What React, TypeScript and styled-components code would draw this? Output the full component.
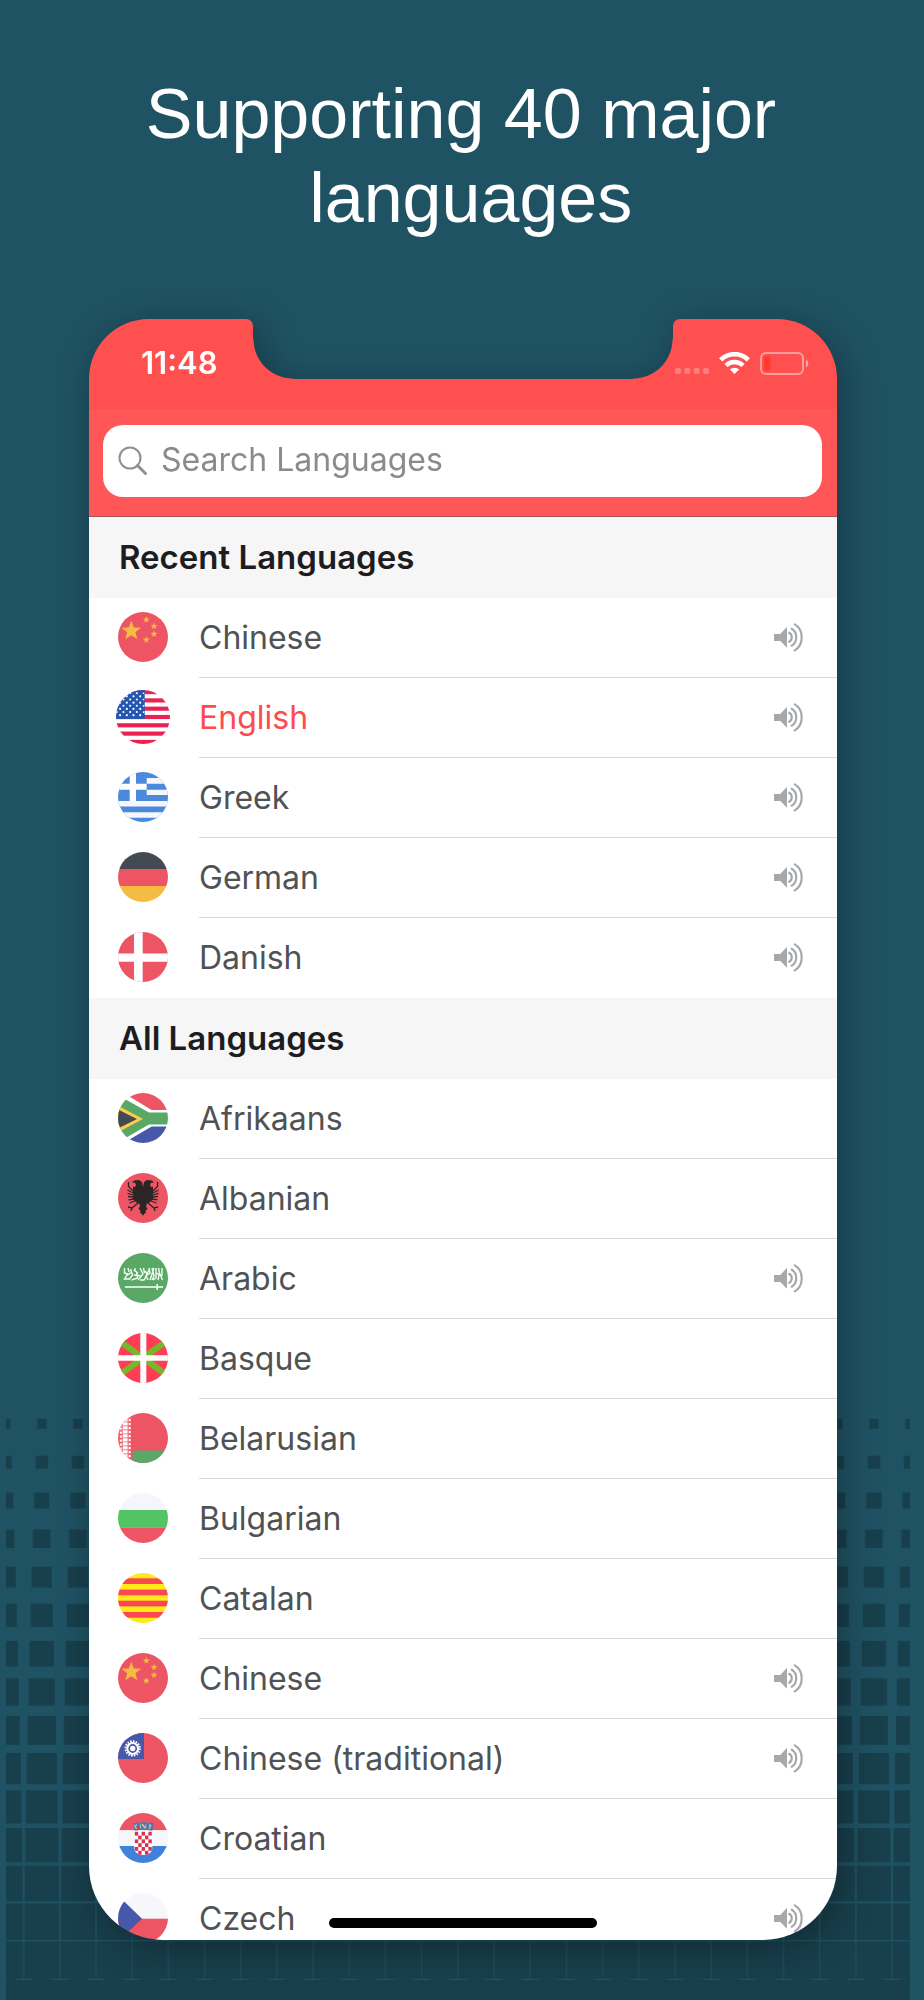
import React from 'react';
import styled, { createGlobalStyle } from 'styled-components';

const GlobalStyle = createGlobalStyle`
  *, *::before, *::after { box-sizing: border-box; }
  body { margin: 0; background: #1f5263; }
  button, input { font: inherit; color: inherit; }
`;

const coral = '#ff5050';
const coralLight = '#ff5757';

const Page = styled.main`
  position: relative;
  display: flex;
  flex-direction: column;
  height: 100vh;
  padding: 72px 87px 60px 89px;
  background: #1f5263;
  font-family: Inter, 'Liberation Sans', sans-serif;
`;

const Backdrop = styled.svg`
  position: absolute;
  left: 6px;
  right: 14px;
  bottom: 0;
  width: calc(100% - 20px);
  height: 600px;
`;

const Headline = styled.h1`
  margin: 0 0 79px;
  padding-right: 4px;
  color: #fff;
  font: 400 70px/84px 'Liberation Sans', Arial, sans-serif;
  text-align: center;
`;

const Phone = styled.section`
  position: relative;
  display: flex;
  flex: 1;
  flex-direction: column;
  min-height: 0;
  filter: drop-shadow(6px 8px 18px rgba(0, 0, 0, 0.3));
`;

const StatusBar = styled.div`
  display: flex;
  height: 60px;
`;

const Ear = styled.div<{ $side: 'left' | 'right' }>`
  display: flex;
  flex: 1 1 80px;
  align-items: center;
  justify-content: ${(p) => (p.$side === 'left' ? 'flex-start' : 'flex-end')};
  gap: 10px;
  padding: ${(p) => (p.$side === 'left' ? '28px 0 0 52px' : '28px 28px 0 0')};
  border-radius: ${(p) => (p.$side === 'left' ? '78px 9px 0 0' : '9px 78px 0 0')};
  background: ${coral};
`;

const Time = styled.time`
  color: #fff;
  font-size: 31px;
  font-weight: 600;
  line-height: 32px;
`;

const Notch = styled.div`
  display: flex;
  align-items: flex-end;
  justify-content: space-between;
  width: 420px;

  &::before,
  &::after {
    content: '';
    width: 40px;
    height: 40px;
  }
  &::before { background: radial-gradient(circle at 100% 0, transparent 39px, ${coral} 40px); }
  &::after { background: radial-gradient(circle at 0 0, transparent 39px, ${coral} 40px); }
`;

const StatusBase = styled.div`
  height: 30px;
  background: ${coral};
`;

const SearchBar = styled.div`
  padding: 16px 15px 19px 14px;
  border-bottom: 1px solid #a8555a;
  background: ${coralLight};
`;

const SearchField = styled.label`
  display: flex;
  align-items: center;
  gap: 13px;
  height: 72px;
  padding: 0 15px;
  border-radius: 20px;
  background: #fff;
`;

const SearchInput = styled.input`
  flex: 1;
  min-width: 0;
  padding: 0 0 2px;
  border: 0;
  outline: 0;
  background: transparent;
  color: #4f5153;
  font-size: 32px;
  line-height: 40px;

  &::placeholder { color: #8a8a8f; opacity: 1; }
`;

const Lists = styled.div`
  flex: 1;
  min-height: 0;
  overflow-y: auto;
  border-radius: 0 0 74px 74px;
  background: #fff;
  scrollbar-width: none;
`;

const SectionTitle = styled.h2`
  margin: 0;
  padding: 0 30px;
  background: #f6f6f6;
  color: #1d1d1f;
  font-size: 33px;
  font-weight: 600;
  line-height: 81px;
`;

const List = styled.ul`
  margin: 0;
  padding: 0;
  list-style: none;
`;

const Row = styled.li`
  display: flex;
  height: 80px;
`;

const FlagCell = styled.div`
  display: flex;
  align-items: center;
  justify-content: center;
  width: 110px;
  padding: 0 2px 2px 0;
`;

const FlagArt = styled.svg`
  display: block;
  flex: none;
  border-radius: 50%;
`;

const RowBody = styled.div`
  display: flex;
  flex: 1;
  align-items: center;
  padding-right: 33px;
  border-bottom: 1px solid #d9d9db;

  ${Row}:last-child & { border-bottom-color: transparent; }
`;

const NameButton = styled.button<{ $selected?: boolean }>`
  flex: 1;
  height: 100%;
  padding: 0;
  border: 0;
  background: none;
  color: ${(p) => (p.$selected ? '#ff4b4e' : '#505254')};
  font-size: 32px;
  line-height: 40px;
  text-align: left;
  cursor: pointer;
`;

const SpeakButton = styled.button`
  display: flex;
  padding: 0;
  border: 0;
  background: none;
  cursor: pointer;
`;

const HomeIndicator = styled.div`
  position: absolute;
  bottom: 12px;
  left: 50%;
  width: 268px;
  height: 10px;
  border-radius: 5px;
  background: #000;
  transform: translateX(-50%);
`;

/* ---------- backdrop: squares that grow row by row into a solid floor ---------- */

const cells = [
  [9.3, 10], [12.3, 13], [15.3, 16], [17.7, 18.6], [20.3, 21], [22.3, 23.3], [24.5, 25.7],
  [26.2, 27.3], [28.3, 29], [30.2, 31.2], [31.5, 33.2], [33, 34.4], [34.2, 35.8], [34.8, 36.7], [35.2, 37.4],
];

function Pattern() {
  return (
    <Backdrop aria-hidden="true">
      <defs>
        <pattern id="squares" x="-18.5" y="0" width="36.18" height="600" patternUnits="userSpaceOnUse">
          {cells.map(([w, h], i) => (
            <rect key={i} x={18.09 - w / 2} y={23.9 + i * 38.3 - h / 2} width={w} height={h} fill="#183f4c" />
          ))}
          <rect y="579" width="37" height="21" fill="#183f4c" />
          <path d="M0 579.5h8M28 579.5h9" stroke="#1f5263" strokeWidth="1" />
        </pattern>
      </defs>
      <rect width="100%" height="600" fill="url(#squares)" />
    </Backdrop>
  );
}

/* ---------- flags ---------- */

const red = '#ed5565';
const white = '#f5f7fa';
const yellow = '#f6bb42';
const navy = '#4758a9';
const green = '#5aa865';

function starPoints(cx: number, cy: number, r: number) {
  return Array.from({ length: 10 }, (_, i) => {
    const a = -Math.PI / 2 + (i * Math.PI) / 5;
    const k = i % 2 ? r * 0.42 : r;
    return `${(cx + k * Math.cos(a)).toFixed(2)},${(cy + k * Math.sin(a)).toFixed(2)}`;
  }).join(' ');
}

const smallStars = [[28.3, 7.7], [36, 14.2], [36, 22], [28.3, 27.8]];

const flags: Record<string, React.ReactNode> = {
  cn: (
    <>
      <rect width="50" height="50" fill={red} />
      <polygon points={starPoints(13.3, 19, 10.3)} fill={yellow} />
      {smallStars.map(([x, y]) => (
        <polygon key={`${x}-${y}`} points={starPoints(x, y, 3.6)} fill={yellow} />
      ))}
    </>
  ),
  us: (
    <>
      <rect width="50" height="50" fill="#fff" />
      {[0, 2, 4, 6, 8, 10, 12].map((i) => (
        <rect key={i} y={i * 3.846} width="50" height="3.846" fill="#eb2150" />
      ))}
      <rect width="26.6" height="26.9" fill="#2557b0" />
      {Array.from({ length: 8 }, (_, r) =>
        Array.from({ length: 4 }, (_, c) => (
          <circle key={`${r}-${c}`} cx={(r % 2 ? 3.8 : 0.7) + c * 6.2} cy={3 + r * 2.9} r="1" fill="#fff" />
        )),
      )}
      {[0, 2, 4, 6].map((r) => (
        <circle key={r} cx="25.5" cy={3 + r * 2.9} r="0.8" fill="#fff" />
      ))}
    </>
  ),
  gr: (
    <>
      <rect width="50" height="50" fill="#4a89dc" />
      <path d="M28.7 6H50v5.7H28.7zM28.7 17.7H50V23H28.7zM0 29h50v5.4H0zM0 40.3h50v5.4H0z" fill={white} />
      <path d="M11.7 0H18v29h-6.3zM0 11.7h28.7v6H0z" fill="#fff" />
    </>
  ),
  de: (
    <>
      <rect width="50" height="17" fill="#434a54" />
      <rect y="17" width="50" height="17" fill={red} />
      <rect y="34" width="50" height="16" fill={yellow} />
    </>
  ),
  dk: (
    <>
      <rect width="50" height="50" fill={red} />
      <path d="M16 0h8.7v50H16zM0 21.5h50v8.3H0z" fill="#fff" />
    </>
  ),
  za: (
    <>
      <rect width="50" height="50" fill="#fff" />
      <path d="M5.5 0L33.7 17H50V0z" fill={red} />
      <path d="M5.5 50l28.2-16.6H50V50z" fill={navy} />
      <path d="M-4 0L31 19.4h19v12H31L-4 51.5z" fill={green} />
      <path d="M-2 11.8L25 26-2 40.2z" fill="#ffce46" />
      <path d="M-2 15.5L19 26-2 36.5z" fill="#434a54" />
    </>
  ),
  al: (
    <>
      <rect width="50" height="50" fill={red} />
      <path
        d="M25 14l1-5 3-2 5 .5 2 2-3 .2-1 2 1 2.3 2-.5v13l-3.5 3-2.5 1-1 2.5 1.5 3-2 1.5.5 2.5-1.7.5L25 43l-1.3-2.5-1.7-.5.5-2.5-2-1.5 1.5-3-1-2.5-2.5-1-3.5-3v-13l2 .5 1-2.3-1-2-3-.2 2-2 5-.5 3 2z"
        fill="#2b2526"
      />
      <path
        d="M15 18l-4.5-4.5V9M39.5 9v4.5L35 18M15 20l-5.5-3M35 20l5.5-3M15 22l-5.5-1.7M35 22l5.5-1.7M15.5 24l-5.5-.5M34.5 24l5.5-.5M16 26l-5.5.8M34 26l5.5.8M17 28l-5.5 2M33 28l5.5 2M20 30l-6 5-4-1m4 1l-1 3M30 30l6 5 4-1m-4 1l1 3"
        fill="none"
        stroke="#2b2526"
        strokeWidth="1.3"
      />
    </>
  ),
  sa: (
    <>
      <rect width="50" height="50" fill={green} />
      <path
        d="M6.5 15v5l3 1-3 5h5l3-4-2-6M10 15l1 4M13.5 27l6-2-1-6-3-2M17 15v3l3 2M20 27l5-6-3-6M22 27h4l3-5-1.5-4M25.5 15l1 5M30 27l-2-4 4-3-1-5M32 27l4-12M34 15l2 8-2 4M38 15v10l-3 2M40 27l1-5-2-2M40.5 15l1 5 3 7M44 15v8M8 23l6-4M16 22l8 1M27 25l4-8"
        fill="none"
        stroke="#f3fbf4"
        strokeWidth="1.4"
      />
      <path d="M7 34h38M39.2 31v6" stroke="#fff" strokeWidth="1.5" />
    </>
  ),
  eu: (
    <>
      <rect width="50" height="50" fill="#ff3d55" />
      <path d="M0 7l50 36M50 7L0 43" stroke="#76b82a" strokeWidth="6" />
      <path d="M22.3 0h6v50h-6zM0 22.3h50v5.5H0z" fill="#fff" />
    </>
  ),
  by: (
    <>
      <rect width="50" height="50" fill={red} />
      <rect x="14.7" y="37.5" width="36" height="13" fill={green} />
      {Array.from({ length: 12 }, (_, i) => (
        <path
          key={i}
          d={`M1.8 ${2.5 + i * 4}h2v2.2h-2zM5 ${1.3 + i * 4}h4.5v3.3H5zM10.8 ${2 + i * 4}h2v2.3h-2z`}
          fill="#fff"
        />
      ))}
      <path d="M4.3 0v50M10 0v50" stroke="#fff" strokeWidth=".4" />
    </>
  ),
  bg: (
    <>
      <rect width="50" height="17" fill="#f5f6fb" />
      <rect y="17" width="50" height="17.3" fill="#53c463" />
      <rect y="34.3" width="50" height="16" fill={red} />
    </>
  ),
  ca: (
    <>
      <rect width="50" height="50" fill="#ffe919" />
      {[5.3, 16.6, 27.7, 39].map((y) => (
        <rect key={y} y={y} width="50" height="5.7" fill="#fb4654" />
      ))}
    </>
  ),
  tw: (
    <>
      <rect width="50" height="50" fill={red} />
      <rect width="26" height="26" fill={navy} />
      <circle cx="14.7" cy="15.5" r="7.2" fill="none" stroke="#fff" strokeWidth="2" strokeDasharray="1.6 1.23" />
      <circle cx="14.7" cy="15.5" r="5.4" fill="none" stroke="#fff" strokeWidth="2" />
      <circle cx="14.7" cy="15.5" r="2.7" fill="#fff" />
    </>
  ),
  hr: (
    <>
      <rect width="50" height="17.3" fill={red} />
      <rect y="17.3" width="50" height="15.7" fill={white} />
      <rect y="33" width="50" height="17" fill="#4082db" />
      <path d="M16.3 18.3h18v17c0 4-4 6.7-9 6.7s-9-2.7-9-6.7z" fill="#fff" />
      {Array.from({ length: 30 }, (_, i) => [i % 5, Math.floor(i / 5)])
        .filter(([c, r]) => (c + r) % 2 === 0 && !(r === 5 && (c === 0 || c === 4)))
        .map(([c, r]) => (
          <rect key={`${c}-${r}`} x={16.8 + c * 3.4} y={18.8 + r * 3.8} width="3.4" height="3.8" fill="#dc3150" />
        ))}
      <path d="M15 10.5l3.8-1.2 1.9 1.7 2-1.5 2.8-.7 2.8.7 2 1.5 1.9-1.7 3.8 1.2-1.7 7.3c-5-1.5-12.6-1.5-17.6 0z" fill="#4f74b8" />
      <path d="M16.5 12l2 4M24 11l3 4M33 12l-2 4" stroke="#e9d254" strokeWidth="1.3" />
      <path d="M20.5 12v4M29.5 12v4" stroke="#dc3150" strokeWidth="1.2" />
      <path d="M22.3 11.5v4M18 11l1 2M27.8 11.5v4M32 11l-1 2" stroke="#8ed4e0" strokeWidth="1" />
    </>
  ),
  cz: (
    <>
      <rect width="50" height="25.7" fill={white} />
      <rect y="25.7" width="50" height="25" fill={red} />
      <path d="M-2 .6L24 25.7-2 50.5z" fill={navy} />
    </>
  ),
};

function Flag({ code }: { code: string }) {
  const size = code === 'us' ? 54 : 50;
  return (
    <FlagArt width={size} height={size} viewBox="0 0 50 50" aria-hidden="true">
      {flags[code]}
    </FlagArt>
  );
}

/* ---------- icons ---------- */

const Speaker = () => (
  <svg width="30" height="29" viewBox="0 0 30 29" fill="none" aria-hidden="true">
    <path d="M0 11h6.3L13 3.7v21L6.3 18H0z" fill="#a6a9ac" />
    <path
      d="M15.2 9.8c3.4 2 3.4 7 0 9M17.7 5.7c6 3.5 6 13.6 0 17M20.8 1.4c9.2 5.2 9.2 20.7 0 26"
      stroke="#a6a9ac"
      strokeWidth="2.2"
      strokeLinecap="round"
    />
  </svg>
);

const Magnifier = () => (
  <svg width="30" height="30" viewBox="0 0 30 30" fill="none" stroke="#8e8e93" aria-hidden="true">
    <circle cx="12" cy="12" r="10.5" strokeWidth="2" />
    <path d="M19.5 19.5l8 8" strokeWidth="3" strokeLinecap="round" />
  </svg>
);

const Signal = () => (
  <svg width="34" height="22" viewBox="0 0 34 22" fill="#ff7c7c" aria-hidden="true">
    {[0, 9.3, 18.7, 28].map((x) => (
      <rect key={x} x={x} y="16" width="6" height="6" rx="1.8" />
    ))}
  </svg>
);

const Wifi = () => (
  <svg width="31" height="22" viewBox="0 0 31 22" fill="none" stroke="#fff" aria-hidden="true">
    <path d="M1.7 7.9a19.5 19.5 0 0 1 27.6 0" strokeWidth="4.6" />
    <path d="M7 13.5a12.2 12.2 0 0 1 17 0" strokeWidth="4.4" />
    <path d="M10.8 17.6a6.8 6.8 0 0 1 9.4 0L15.5 22z" fill="#fff" stroke="none" />
  </svg>
);

const Battery = () => (
  <svg width="49" height="23" viewBox="0 0 49 23" fill="none" aria-hidden="true">
    <rect x="1" y="1" width="42" height="21" rx="5" stroke="#ff9c9c" strokeWidth="2" />
    <rect x="4" y="4" width="6.5" height="15" rx="2.5" fill="#ff3b30" />
    <path d="M46 7.5c3 1.5 3 6.5 0 8z" fill="#ffa6a6" />
  </svg>
);

/* ---------- data ---------- */

type Language = { name: string; code: string; voice?: boolean; selected?: boolean };

const recent: Language[] = [
  { name: 'Chinese', code: 'cn', voice: true },
  { name: 'English', code: 'us', voice: true, selected: true },
  { name: 'Greek', code: 'gr', voice: true },
  { name: 'German', code: 'de', voice: true },
  { name: 'Danish', code: 'dk', voice: true },
];

const all: Language[] = [
  { name: 'Afrikaans', code: 'za' },
  { name: 'Albanian', code: 'al' },
  { name: 'Arabic', code: 'sa', voice: true },
  { name: 'Basque', code: 'eu' },
  { name: 'Belarusian', code: 'by' },
  { name: 'Bulgarian', code: 'bg' },
  { name: 'Catalan', code: 'ca' },
  { name: 'Chinese', code: 'cn', voice: true },
  { name: 'Chinese (traditional)', code: 'tw', voice: true },
  { name: 'Croatian', code: 'hr' },
  { name: 'Czech', code: 'cz', voice: true },
];

function LanguageList({ title, items }: { title: string; items: Language[] }) {
  return (
    <>
      <SectionTitle>{title}</SectionTitle>
      <List>
        {items.map((l) => (
          <Row key={l.name}>
            <FlagCell>
              <Flag code={l.code} />
            </FlagCell>
            <RowBody>
              <NameButton type="button" $selected={l.selected}>
                {l.name}
              </NameButton>
              {l.voice && (
                <SpeakButton type="button" aria-label={`Play ${l.name}`}>
                  <Speaker />
                </SpeakButton>
              )}
            </RowBody>
          </Row>
        ))}
      </List>
    </>
  );
}

export default function App() {
  return (
    <>
      <GlobalStyle />
      <Page>
        <Pattern />
        <Headline>
          Supporting 40 major
          <br />
          {'\u00a0'}languages
        </Headline>
        <Phone>
          <StatusBar>
            <Ear $side="left">
              <Time>11:48</Time>
            </Ear>
            <Notch />
            <Ear $side="right">
              <Signal />
              <Wifi />
              <Battery />
            </Ear>
          </StatusBar>
          <StatusBase />
          <SearchBar>
            <SearchField>
              <Magnifier />
              <SearchInput type="search" placeholder="Search Languages" aria-label="Search Languages" />
            </SearchField>
          </SearchBar>
          <Lists>
            <LanguageList title="Recent Languages" items={recent} />
            <LanguageList title="All Languages" items={all} />
          </Lists>
          <HomeIndicator />
        </Phone>
      </Page>
    </>
  );
}
